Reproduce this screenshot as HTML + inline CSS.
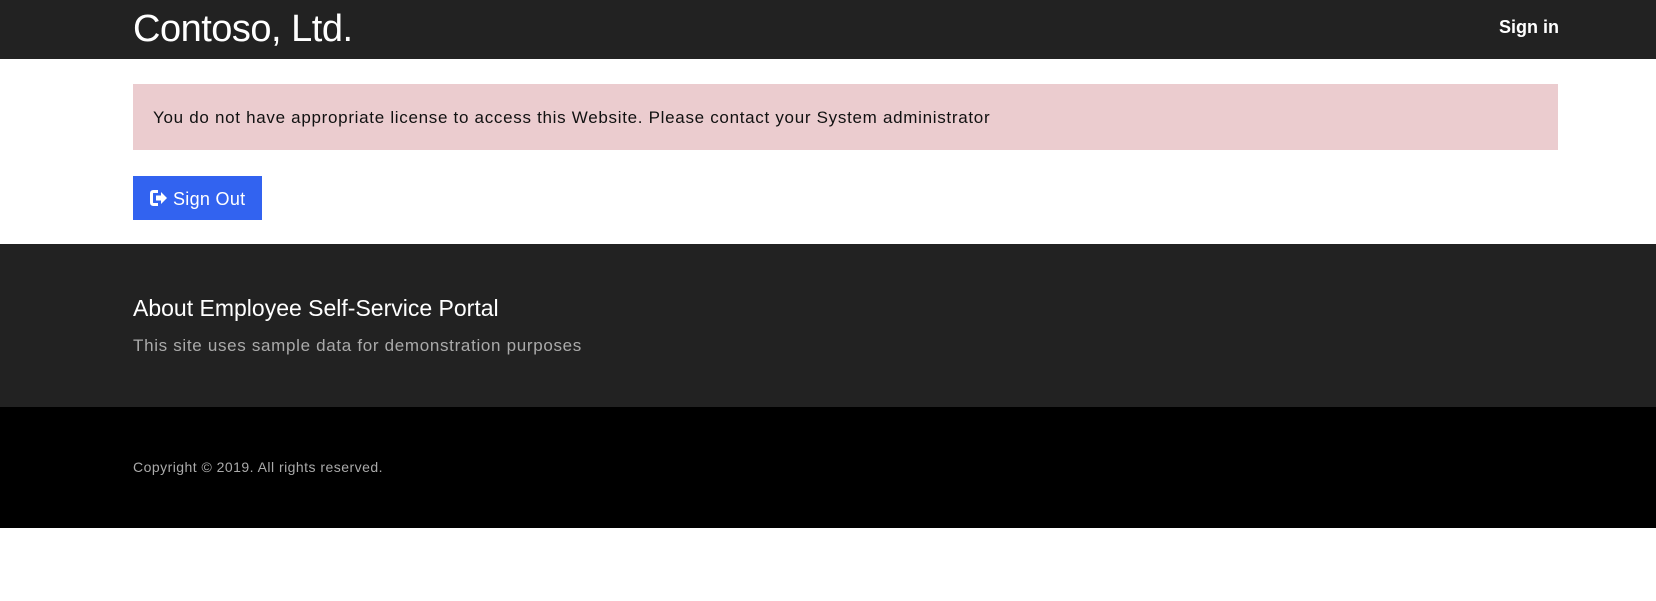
<!DOCTYPE html>
<html><head><style>
body{margin:0;font-family:"Liberation Sans",sans-serif;background:#fff;}
.c{position:absolute;left:133px;width:1425px;}
</style></head><body>
<div style="position:absolute;left:0;top:0;width:1656px;height:59px;background:#222;"></div>
<div class="c" style="top:6px;color:#fff;font-size:38px;font-weight:300;line-height:46px;letter-spacing:-0.5px;">Contoso, Ltd.</div>
<div style="position:absolute;left:1499px;top:17px;color:#fff;font-weight:bold;font-size:18px;">Sign in</div>
<div class="c" style="top:84px;height:66px;background:#ebcccf;"></div>
<div class="c" style="top:108px;left:153px;font-size:17px;color:#111;letter-spacing:0.7px;">You do not have appropriate license to access this Website. Please contact your System administrator</div>
<div style="position:absolute;left:133px;top:176px;width:129px;height:44px;background:#3263f0;color:#fff;font-size:18px;line-height:46px;">
<svg style="position:absolute;left:16px;top:13px" width="20" height="18" viewBox="0 0 20 18"><path d="M9 2.5H4.5Q2.5 2.5 2.5 4.5v9q0 2 2 2H9" fill="none" stroke="#fff" stroke-width="3"/><path d="M7 6.5h5V3l6 6-6 6v-3.5H7z" fill="#fff"/></svg>
<span style="position:absolute;left:40px;letter-spacing:0.3px;">Sign Out</span></div>
<div style="position:absolute;left:0;top:244px;width:1656px;height:163px;background:#222;"></div>
<div class="c" style="top:295px;color:#fff;font-size:23px;font-weight:300;">About Employee Self-Service Portal</div>
<div class="c" style="top:336px;color:#aaa;font-size:17px;letter-spacing:0.68px;">This site uses sample data for demonstration purposes</div>
<div style="position:absolute;left:0;top:407px;width:1656px;height:121px;background:#000;"></div>
<div class="c" style="top:459px;color:#aaa;font-size:14px;letter-spacing:0.47px;">Copyright © 2019. All rights reserved.</div>
</body></html>
